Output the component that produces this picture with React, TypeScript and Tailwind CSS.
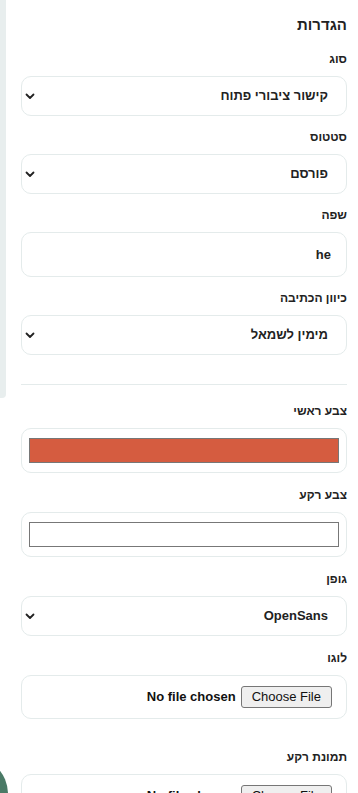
import React from "react";

const Chevron = () => (
  <svg width="10" height="7" viewBox="0 0 10 7" className="shrink-0">
    <polyline points="1.5,1.5 5,5 8.5,1.5" fill="none" stroke="#222" strokeWidth="1.8" strokeLinecap="round" strokeLinejoin="round" />
  </svg>
);

const Label = ({ children }: { children: React.ReactNode }) => (
  <div className="text-[12px] leading-4 font-bold text-[#222] mb-[9px]">{children}</div>
);

const SelectBox = ({ value }: { value: string }) => (
  <div className="h-10 rounded-[10px] border border-[#e4ebeb] bg-white flex items-center justify-between pr-[18px] pl-[3px]">
    <span className="text-[13px] font-bold text-[#222]">{value}</span>
    <Chevron />
  </div>
);

const ColorBox = ({ color }: { color: string }) => (
  <div className="h-[45px] rounded-[10px] border border-[#e4ebeb] bg-white flex items-center px-[7px]">
    <div className="h-[25px] w-full border border-[#777777]" style={{ backgroundColor: color }} />
  </div>
);

const FileBox = () => (
  <div className="h-[44px] rounded-[10px] border border-[#e4ebeb] bg-white flex items-center pr-[14px] gap-[5px]">
    <span className="h-[22px] px-[10px] flex items-center rounded-[3px] border border-[#767676] bg-[#efefef] text-[13px] text-[#111]">
      Choose File
    </span>
    <span className="text-[13px] font-bold text-[#111]">No file chosen</span>
  </div>
);

export default function App() {
  return (
    <div
      dir="rtl"
      className="relative w-[358px] h-[793px] overflow-hidden bg-white"
      style={{ fontFamily: '"Liberation Sans", Arial, "DejaVu Sans", sans-serif' }}
    >
      <div className="absolute left-0 top-0 w-[6px] h-[398px] bg-[#e8eeee] rounded-br-[4px]" />
      <div className="absolute left-[-30px] top-[756px] w-[38px] h-[60px] bg-[#4a7a66] rounded-tr-[38px]" />

      <div className="pr-[11px] pl-[21px] pt-[15px]">
        <div className="text-[15px] leading-5 font-bold text-[#222] mb-4">הגדרות</div>

        <div className="flex flex-col gap-[13px]">
          <div>
            <Label>סוג</Label>
            <SelectBox value="קישור ציבורי פתוח" />
          </div>
          <div>
            <Label>סטטוס</Label>
            <SelectBox value="פורסם" />
          </div>
          <div>
            <Label>שפה</Label>
            <div className="h-[45px] rounded-[10px] border border-[#e4ebeb] bg-white flex items-center pr-[15px]">
              <span className="text-[13px] font-bold text-[#222]">he</span>
            </div>
          </div>
          <div>
            <Label>כיוון הכתיבה</Label>
            <SelectBox value="מימין לשמאל" />
          </div>
        </div>

        <div className="h-px bg-[#e4ebeb] mt-[29px] mb-[18px]" />

        <div className="flex flex-col gap-[14px]">
          <div>
            <Label>צבע ראשי</Label>
            <ColorBox color="#d55c40" />
          </div>
          <div>
            <Label>צבע רקע</Label>
            <ColorBox color="#ffffff" />
          </div>
          <div>
            <Label>גופן</Label>
            <SelectBox value="OpenSans" />
          </div>
          <div>
            <Label>לוגו</Label>
            <FileBox />
          </div>
          <div className="mt-[16px]">
            <Label>תמונת רקע</Label>
            <FileBox />
          </div>
        </div>
      </div>
    </div>
  );
}
